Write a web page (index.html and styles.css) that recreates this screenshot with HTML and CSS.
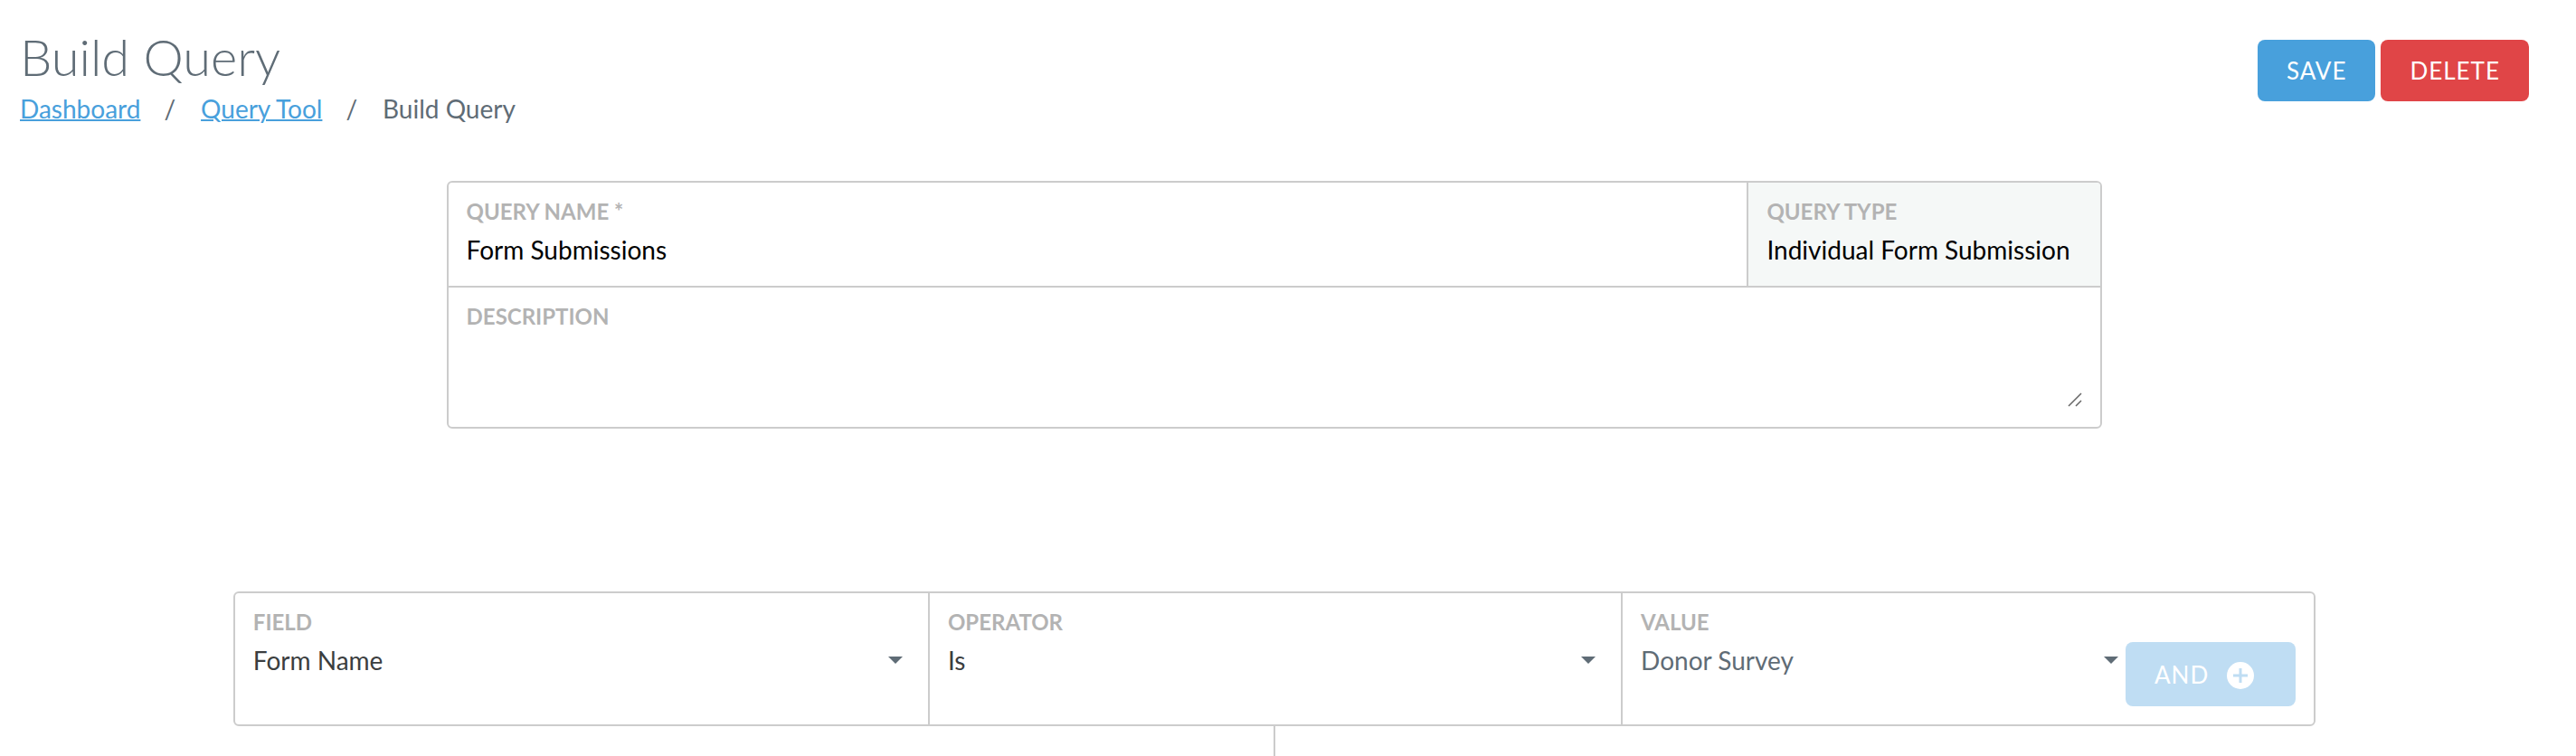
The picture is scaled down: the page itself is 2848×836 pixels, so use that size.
FILE: index.html
```html
<!DOCTYPE html>
<html lang="en">
<head>
    <meta charset="UTF-8">
    <meta name="viewport" content="width=device-width, initial-scale=1.0">
    <title>Build Query</title>
    <link rel="stylesheet" href="styles.css">
</head>
<body>

    <header class="page-header">
        <div>
            <h1>Build Query</h1>
            <nav class="breadcrumbs">
                <a href="#">Dashboard</a>
                <span class="separator">/</span>
                <a href="#">Query Tool</a>
                <span class="separator">/</span>
                <span>Build Query</span>
            </nav>
        </div>
        <div class="button-group">
            <button type="button" class="btn btn-save">SAVE</button>
            <button type="button" class="btn btn-delete">DELETE</button>
        </div>
    </header>

    <main>
        <form class="card query-form">
            <div class="query-row">
                <div class="field">
                    <label for="queryName">QUERY NAME *</label>
                    <input type="text" id="queryName" value="Form Submissions">
                </div>
                <div class="field field-readonly">
                    <label for="queryType">QUERY TYPE</label>
                    <input type="text" id="queryType" value="Individual Form Submission" readonly>
                </div>
            </div>
            <div class="field field-description">
                <label for="description">DESCRIPTION</label>
                <textarea id="description"></textarea>
                <svg class="resize-handle" viewBox="0 0 16 16" aria-hidden="true">
                    <path d="M1 15L15 1M9 15l6-6"/>
                </svg>
            </div>
        </form>

        <!-- Filter row -->
        <div class="card filter-row">
            <div class="filter-cell">
                <div class="filter-field">
                    <label for="filterField">FIELD</label>
                    <div class="select-wrap">
                        <select id="filterField"><option>Form Name</option></select>
                    </div>
                </div>
            </div>
            <div class="filter-cell">
                <div class="filter-field">
                    <label for="filterOperator">OPERATOR</label>
                    <div class="select-wrap">
                        <select id="filterOperator"><option>Is</option></select>
                    </div>
                </div>
            </div>
            <div class="filter-cell">
                <div class="filter-field">
                    <label for="filterValue">VALUE</label>
                    <div class="select-wrap">
                        <select id="filterValue" class="select-value"><option>Donor Survey</option></select>
                    </div>
                </div>
                <button type="button" class="btn btn-and">
                    AND
                    <svg class="plus-icon" viewBox="0 0 30 30" aria-hidden="true">
                        <circle cx="15" cy="15" r="15"/>
                        <path d="M15 7v16M7 15h16"/>
                    </svg>
                </button>
            </div>
        </div>
        <div class="connector"></div>
    </main>

</body>
</html>
```
FILE: styles.css
```css
* {
    box-sizing: border-box;
}

body {
    font-family: Lato, "Liberation Sans", sans-serif;
    font-size: 28px;
    line-height: 32px;
    background: #fff;
    margin: 0;
    padding: 28px 52px 0 22px;
    color: #5f6c76;
}

/* Header */
.page-header {
    display: flex;
    justify-content: space-between;
    align-items: flex-start;
}

h1 {
    font-size: 56px;
    font-weight: 300;
    line-height: 70px;
    margin: 0 0 6px;
}

.breadcrumbs {
    display: flex;
}

.breadcrumbs a {
    color: #48a0dc;
    text-decoration-thickness: 2px;
}

.separator {
    margin: 0 28px 0 26px;
}

/* Buttons */
.button-group {
    display: flex;
    gap: 6px;
    padding-top: 16px;
}

.btn {
    font-family: inherit;
    font-size: 26px;
    line-height: 32px;
    letter-spacing: 1px;
    color: #fff;
    padding: 18px 32px;
    border: none;
    border-radius: 8px;
    cursor: pointer;
}

.btn-save {
    background: #48a0dc;
}

.btn-delete {
    background: #e04547;
}

/* Cards */
.card {
    margin: 0 auto;
    border: 2px solid #ccc;
    border-radius: 6px;
}

label {
    display: block;
    font-size: 24px;
    font-weight: bold;
    line-height: 28px;
    color: #b3b3b3;
    margin-bottom: 12px;
}

input,
textarea,
select {
    display: block;
    width: 100%;
    height: 32px;
    font-family: inherit;
    font-size: 28px;
    line-height: 32px;
    color: #000;
    background: transparent;
    border: none;
    padding: 0;
    margin: 0;
}

/* Query details */
.query-form {
    width: 66%;
    margin-top: 64px;
}

.query-row {
    display: flex;
    border-bottom: 2px solid #ccc;
}

.field {
    flex: 1;
    padding: 18px 20px 24px;
}

.field-readonly {
    flex: 0 0 391px;
    background: #f5f8f7;
    border-left: 2px solid #ccc;
    border-radius: 0 4px 0 0;
}

.field-description {
    position: relative;
    padding-bottom: 20px;
}

textarea {
    height: 76px;
    resize: none;
}

.resize-handle {
    position: absolute;
    right: 20px;
    bottom: 22px;
    width: 16px;
    height: 16px;
    stroke: #666;
    stroke-width: 1.5;
    fill: none;
    pointer-events: none;
}

/* Filter row */
.filter-row {
    width: 83%;
    margin-top: 180px;
    display: grid;
    grid-template-columns: repeat(3, 1fr);
}

.filter-cell {
    display: flex;
    align-items: flex-end;
    padding: 18px 20px 20px;
}

.filter-cell + .filter-cell {
    border-left: 2px solid #ccc;
}

.filter-field {
    flex: 1;
    align-self: flex-start;
}

.select-wrap {
    position: relative;
}

.select-wrap::after {
    content: "";
    position: absolute;
    top: 12px;
    right: 8px;
    border: 8px solid transparent;
    border-top-color: #5f6c76;
    border-bottom: none;
    pointer-events: none;
}

select {
    appearance: none;
    color: #3b3e40;
}

.select-value {
    color: #5f6c76;
}

.btn-and {
    display: flex;
    align-items: center;
    height: 71px;
    margin-top: 36px;
    background: #bfddf3;
}

.plus-icon {
    width: 30px;
    height: 30px;
    margin: 2px 14px 0 20px;
    fill: #fff;
    stroke: none;
}

.plus-icon path {
    stroke: #bfddf3;
    stroke-width: 3;
}

/* Line down to the next filter */
.connector {
    width: 2px;
    height: 33px;
    margin: 0 auto;
    background: #ccc;
}
```
